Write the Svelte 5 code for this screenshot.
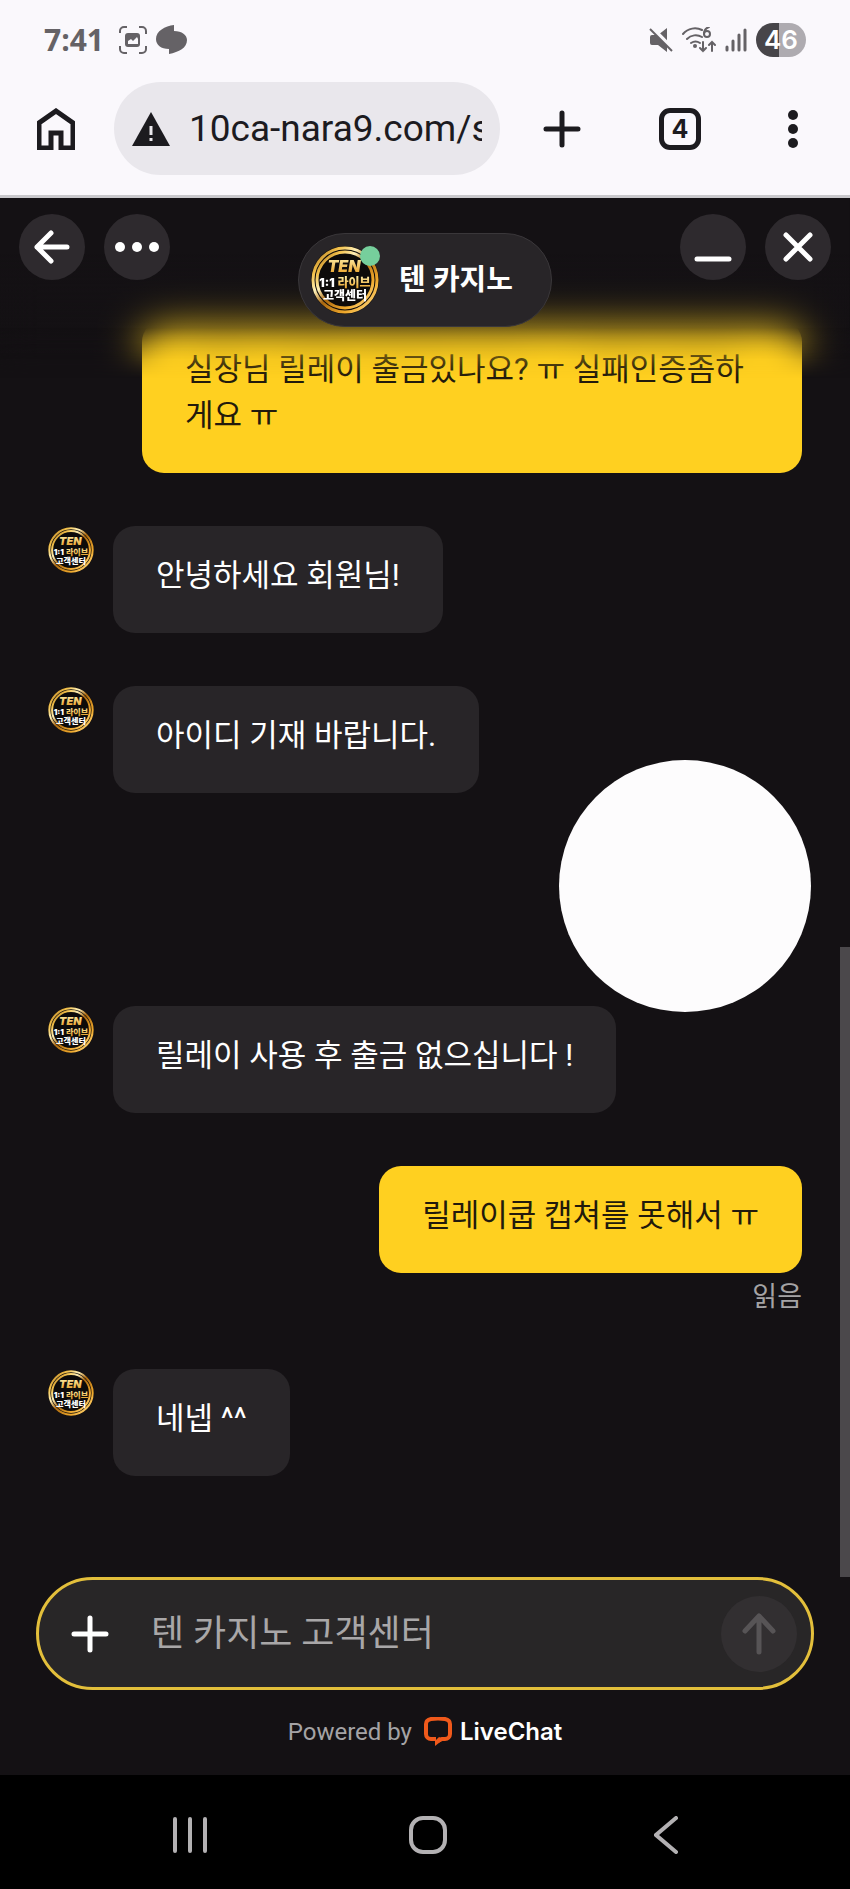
<script lang="ts">
  interface Message {
    id: number
    from: 'agent' | 'visitor'
    text: string
    read?: boolean
    covered?: boolean
  }

  const messages: Message[] = [
    { id: 1, from: 'visitor', text: '실장님 릴레이 출금있나요? ㅠ 실패인증좀하게요 ㅠ' },
    { id: 2, from: 'agent', text: '안녕하세요 회원님!' },
    { id: 3, from: 'agent', text: '아이디 기재 바랍니다.' },
    { id: 4, from: 'visitor', text: '', covered: true },
    { id: 5, from: 'agent', text: '릴레이 사용 후 출금 없으십니다 !' },
    { id: 6, from: 'visitor', text: '릴레이쿱 캡쳐를 못해서 ㅠ', read: true },
    { id: 7, from: 'agent', text: '네넵 ^^' },
  ]

  let url = $state('10ca-nara9.com/s')
  let draft = $state('')
</script>

{#snippet avatar()}
  <svg class="avatar" viewBox="0 0 68 68" aria-hidden="true">
    <defs>
      <linearGradient id="gold-ring" x1="0" y1="0" x2="1" y2="1">
        <stop offset="0" stop-color="#8a5410" />
        <stop offset="0.2" stop-color="#f3c14a" />
        <stop offset="0.35" stop-color="#fff0b8" />
        <stop offset="0.5" stop-color="#a8660f" />
        <stop offset="0.75" stop-color="#f0a92c" />
        <stop offset="1" stop-color="#ffe49a" />
      </linearGradient>
      <linearGradient id="gold-text" x1="0" y1="0" x2="0" y2="1">
        <stop offset="0" stop-color="#fff3b0" />
        <stop offset="1" stop-color="#e89a1c" />
      </linearGradient>
    </defs>
    <circle cx="34" cy="34" r="34" fill="#0d0b0a" />
    <circle cx="34" cy="34" r="32" fill="none" stroke="url(#gold-ring)" stroke-width="3" />
    <circle cx="34" cy="34" r="28" fill="none" stroke="url(#gold-ring)" stroke-width="3" />
    <g class="avatar-text">
      <text x="33" y="26" font-size="16" font-style="italic" fill="url(#gold-text)">TEN</text>
      <text x="16" y="41" font-size="12" fill="#ffffff">1:1</text>
      <text x="43" y="41" font-size="12" fill="url(#gold-text)">라이브</text>
      <text x="34" y="54" font-size="12" fill="#ffffff">고객센터</text>
    </g>
  </svg>
{/snippet}

<div class="screen">
  <div class="status-bar">
    <div class="status-group">
      <span class="clock">7:41</span>
      <svg width="28" height="28" viewBox="0 0 28 28" fill="none" stroke="#656266" stroke-width="2">
        <path d="M1 7V5a4 4 0 0 1 4-4h3M20 1h3a4 4 0 0 1 4 4v3M27 20v3a4 4 0 0 1-4 4h-3M8 27H5a4 4 0 0 1-4-4v-3" />
        <rect x="6" y="7" width="15" height="14" rx="3" fill="#656266" stroke="none" />
        <path d="M9 18v-3l3-2 2 2 4-4 1 2v5z" fill="#faf8fc" stroke="none" />
      </svg>
      <svg width="31" height="30" viewBox="0 0 31 30" fill="#656266">
        <path d="M18 0v6c8 0 13 4 13 9 0 8-8 12-18 14v-5C5 24 0 20 0 14 0 6 9 1 18 0z" />
      </svg>
    </div>
    <div class="status-group">
      <svg width="24" height="24" viewBox="0 0 24 24" fill="#656266">
        <path d="M1 9q0-2 2-2h6l9-7v24L9 17H3q-2 0-2-2z" />
        <path d="M3 0l22 22" stroke="#faf8fc" stroke-width="4" />
        <path d="M1 1l22 22" stroke="#656266" stroke-width="2" />
      </svg>
      <svg width="34" height="26" viewBox="0 0 34 26" fill="none" stroke="#656266" stroke-width="2" stroke-linecap="round">
        <path d="M1 7C6 1 14 0 20 3M5 12c4-4 10-5 15-2M9 16c3-2 6-2 9 0" />
        <circle cx="13" cy="19" r="2" fill="#656266" stroke="none" />
        <circle cx="25" cy="7" r="3" />
        <path d="M27 0c-3 1-5 4-5 7" />
        <path d="M21 15v9M18 21l3 3 3-3M30 24v-9M27 18l3-3 3 3" />
      </svg>
      <svg width="22" height="24" viewBox="0 0 22 24" stroke="#656266" stroke-width="3" stroke-linecap="round">
        <path d="M2 19v3M8 13v9M14 7v15M20 2v20" />
      </svg>
      <span class="battery">46</span>
    </div>
  </div>

  <div class="toolbar">
    <button aria-label="Home">
      <svg width="38" height="42" viewBox="0 0 38 42" fill="none" stroke="#1c1b1f" stroke-width="5">
        <path d="M2 40V15L19 3l17 12v25H24V25H14v15z" />
      </svg>
    </button>
    <label class="address">
      <svg width="38" height="34" viewBox="0 0 38 34" aria-label="Not secure">
        <path d="M19 0l19 34H0z" fill="#1c1b1f" />
        <path d="M19 14v9M19 26v3" stroke="#e9e7ec" stroke-width="3" />
      </svg>
      <input type="text" aria-label="Address" bind:value={url} />
    </label>
    <div class="toolbar-actions">
      <button aria-label="New tab">
        <svg width="38" height="38" viewBox="0 0 38 38" stroke="#1c1b1f" stroke-width="5" stroke-linecap="round">
          <path d="M19 3v32M3 19h32" />
        </svg>
      </button>
      <button aria-label="Tabs"><span class="tab-count">4</span></button>
      <button aria-label="Menu">
        <svg width="10" height="38" viewBox="0 0 10 38" fill="#1c1b1f">
          <circle cx="5" cy="5" r="5" />
          <circle cx="5" cy="19" r="5" />
          <circle cx="5" cy="33" r="5" />
        </svg>
      </button>
    </div>
  </div>

  <main class="chat">
    <div class="feed">
      <div class="messages">
        {#each messages as message (message.id)}
          <div class="message {message.from}">
            {#if message.from === 'agent'}
              {@render avatar()}
            {/if}
            {#if message.covered}
              <div class="covered"><span class="cover"></span></div>
            {:else}
              <p class="bubble">{message.text}</p>
            {/if}
            {#if message.read}
              <span class="read">읽음</span>
            {/if}
          </div>
        {/each}
      </div>
      <div class="scrollbar"></div>
    </div>

    <div class="fade"></div>
    <header class="chat-header">
      <div class="header-buttons">
        <button class="round" aria-label="Back">
          <svg width="36" height="36" viewBox="0 0 36 36" class="line">
            <path d="M33 18H3M17 4L3 18l14 14" />
          </svg>
        </button>
        <button class="round" aria-label="More">
          <svg width="44" height="10" viewBox="0 0 44 10" fill="#ffffff">
            <circle cx="5" cy="5" r="5" />
            <circle cx="22" cy="5" r="5" />
            <circle cx="39" cy="5" r="5" />
          </svg>
        </button>
      </div>
      <div class="agent-pill">
        <div class="agent-photo">
          {@render avatar()}
          <span class="online"></span>
        </div>
        <h1>텐 카지노</h1>
      </div>
      <div class="header-buttons end">
        <button class="round" aria-label="Minimize">
          <svg width="38" height="38" viewBox="0 0 38 38" class="line">
            <path d="M3 31h32" />
          </svg>
        </button>
        <button class="round" aria-label="Close">
          <svg width="30" height="30" viewBox="0 0 30 30" class="line">
            <path d="M3 3l24 24M27 3L3 27" />
          </svg>
        </button>
      </div>
    </header>

    <form class="composer" onsubmit={(e) => e.preventDefault()}>
      <button type="button" aria-label="Attach">
        <svg width="38" height="38" viewBox="0 0 38 38" class="line">
          <path d="M19 3v32M3 19h32" />
        </svg>
      </button>
      <input type="text" placeholder="텐 카지노 고객센터" aria-label="Message" bind:value={draft} />
      <button class="send" aria-label="Send">
        <svg width="34" height="42" viewBox="0 0 34 42" class="line">
          <path d="M17 39V3M3 18L17 3l14 15" />
        </svg>
      </button>
    </form>

    <footer class="powered">
      <span>Powered by</span>
      <a href="#livechat">
        <svg width="28" height="29" viewBox="0 0 28 29" fill="none">
          <path d="M12 22H7a5 5 0 0 1-5-5V7q0-4 5-5 7-1 14 0 5 1 5 5v10a5 5 0 0 1-5 5h-3l-4 2" stroke="#f0591b" stroke-width="4" />
          <path d="M11 29v-5l4-4 5 2z" fill="#f0591b" />
        </svg>
        <b>LiveChat</b>
      </a>
    </footer>
  </main>

  <nav class="system-nav">
    <button aria-label="Recents">
      <svg width="34" height="38" viewBox="0 0 34 38">
        <path d="M2 3v32M17 3v32M32 3v32" />
      </svg>
    </button>
    <button aria-label="Home screen">
      <svg width="38" height="38" viewBox="0 0 38 38">
        <rect x="2" y="2" width="34" height="34" rx="12" />
      </svg>
    </button>
    <button aria-label="Go back">
      <svg width="24" height="38" viewBox="0 0 24 38">
        <path d="M22 2L2 19l20 17" />
      </svg>
    </button>
  </nav>
</div>

<style>
  :global(body) {
    background: #000000;
  }

  .screen {
    min-height: 100vh;
    display: flex;
    flex-direction: column;
    font-family: Roboto, 'Noto Sans CJK KR', sans-serif;
    background: #000000;
  }

  button {
    display: flex;
    align-items: center;
    justify-content: center;
    padding: 0;
    border: 0;
    background: none;
    cursor: pointer;
  }

  input {
    min-width: 0;
    padding: 0;
    border: 0;
    outline: 0;
    background: none;
    font-family: inherit;
  }

  svg {
    display: block;
    flex: none;
  }

  .line {
    fill: none;
    stroke: #ffffff;
    stroke-width: 5;
    stroke-linecap: round;
    stroke-linejoin: round;
  }

  .status-bar {
    display: flex;
    justify-content: space-between;
    align-items: center;
    height: 80px;
    padding: 0 44px;
    background: #faf8fc;
  }

  .status-group {
    display: flex;
    align-items: center;
    gap: 9px;
  }

  .clock {
    margin-right: 6px;
    font: 700 30px/40px 'Open Sans', sans-serif;
    color: #656266;
  }

  .battery {
    width: 50px;
    border-radius: 17px;
    background: linear-gradient(to right, #474549 46%, #aeabb0 46%);
    color: #ffffff;
    font: 600 26px/34px Inter, sans-serif;
    text-align: center;
  }

  .toolbar {
    display: flex;
    align-items: center;
    padding: 2px 3px 20px 37px;
    background: #faf8fc;
    border-bottom: 3px solid #c9c8cc;
  }

  .address {
    flex: 1;
    min-width: 0;
    display: flex;
    align-items: center;
    gap: 19px;
    height: 93px;
    margin: 0 3px 0 39px;
    padding: 0 18px;
    border-radius: 47px;
    background: #e9e7ec;
  }

  .address input {
    flex: 1;
    height: 48px;
    font-size: 37px;
    color: #1c1b1f;
  }

  .toolbar-actions {
    display: grid;
    grid-template-columns: 118px 118px 108px;
  }

  .tab-count {
    box-sizing: border-box;
    width: 42px;
    height: 42px;
    border: 5px solid #1c1b1f;
    border-radius: 11px;
    font: 700 25px/32px Inter, sans-serif;
    color: #1c1b1f;
  }

  .chat {
    position: relative;
    flex: 1;
    display: flex;
    flex-direction: column;
    background: #141114;
    color: #ffffff;
  }

  .feed {
    position: relative;
    flex: 1;
  }

  .messages {
    display: flex;
    flex-direction: column;
    gap: 53px;
    padding: 122px 48px 101px;
  }

  .message {
    display: flex;
    align-items: flex-start;
    gap: 19px;
  }

  .message.visitor {
    flex-direction: column;
    align-items: flex-end;
    gap: 0;
  }

  .message .avatar {
    width: 46px;
    height: 46px;
    margin-top: 1px;
  }

  .bubble {
    max-width: 574px;
    margin: 0;
    padding: 27px 43px 34px;
    border-radius: 22px;
    background: #282528;
    font-size: 31px;
    line-height: 46px;
    word-break: break-all;
  }

  .visitor .bubble {
    background: #ffd020;
    color: #221a0c;
  }

  .covered {
    position: relative;
    width: 234px;
    height: 107px;
  }

  .cover {
    position: absolute;
    top: -86px;
    right: -9px;
    width: 252px;
    height: 252px;
    border-radius: 50%;
    background: #fdfcfd;
  }

  .read {
    padding-top: 5px;
    font-size: 27px;
    line-height: 38px;
    color: #a5a3a5;
  }

  .scrollbar {
    position: absolute;
    right: 0;
    bottom: 0;
    width: 10px;
    height: 630px;
    background: #4b484b;
  }

  .fade {
    position: absolute;
    inset: 0 0 auto;
    height: 180px;
    background: linear-gradient(#141114 30%, rgba(20, 17, 20, 0) 90%);
    backdrop-filter: blur(20px);
    mask-image: linear-gradient(#000000 72%, transparent);
  }

  .chat-header {
    position: absolute;
    inset: 0 0 auto;
    display: grid;
    grid-template-columns: 1fr auto 1fr;
    align-items: start;
    padding: 16px 19px 0;
  }

  .header-buttons {
    display: flex;
    gap: 19px;
  }

  .header-buttons.end {
    justify-content: flex-end;
  }

  .round {
    width: 66px;
    height: 66px;
    border-radius: 50%;
    background: #2e2a2e;
  }

  .agent-pill {
    box-sizing: border-box;
    display: flex;
    align-items: center;
    gap: 20px;
    height: 94px;
    margin-top: 19px;
    padding: 0 38px 0 12px;
    border: 1px solid #3a373a;
    border-radius: 47px;
    background: #282528;
  }

  .agent-pill h1 {
    margin: 0;
    font-size: 29px;
    line-height: 42px;
    font-weight: 700;
  }

  .agent-photo {
    position: relative;
  }

  .agent-photo .avatar {
    width: 68px;
    height: 68px;
  }

  .online {
    position: absolute;
    top: 0;
    right: -1px;
    width: 20px;
    height: 20px;
    border-radius: 50%;
    background: #76cf9c;
  }

  .avatar-text {
    font-family: Inter, 'Noto Sans CJK KR', sans-serif;
    font-weight: 900;
    text-anchor: middle;
  }

  .composer {
    box-sizing: border-box;
    display: flex;
    align-items: center;
    height: 113px;
    margin: 0 36px;
    padding: 0 14px 0 32px;
    border: 3px solid #e3bf3b;
    border-radius: 57px;
    background: #282627;
  }

  .composer input {
    flex: 1;
    height: 54px;
    margin-left: 42px;
    font-size: 36px;
    color: #ffffff;
  }

  .composer input::placeholder {
    color: #a9a7a8;
    opacity: 1;
  }

  .send {
    width: 76px;
    height: 76px;
    border-radius: 50%;
    background: #322f31;
  }

  .send .line {
    stroke: #575456;
  }

  .powered {
    display: flex;
    justify-content: center;
    align-items: center;
    gap: 12px;
    height: 83px;
    padding-bottom: 2px;
    font-size: 24px;
    color: #a5a3a5;
  }

  .powered a {
    display: flex;
    align-items: center;
    gap: 8px;
    color: #ffffff;
    text-decoration: none;
  }

  .powered b {
    font-family: Inter, sans-serif;
    font-weight: 600;
  }

  .system-nav {
    display: grid;
    grid-template-columns: repeat(3, 1fr);
    height: 114px;
    padding: 0 65px 0 71px;
    background: #000000;
  }

  .system-nav svg {
    margin-top: 6px;
    fill: none;
    stroke: #b3b1b3;
    stroke-width: 4;
    stroke-linecap: round;
  }
</style>
